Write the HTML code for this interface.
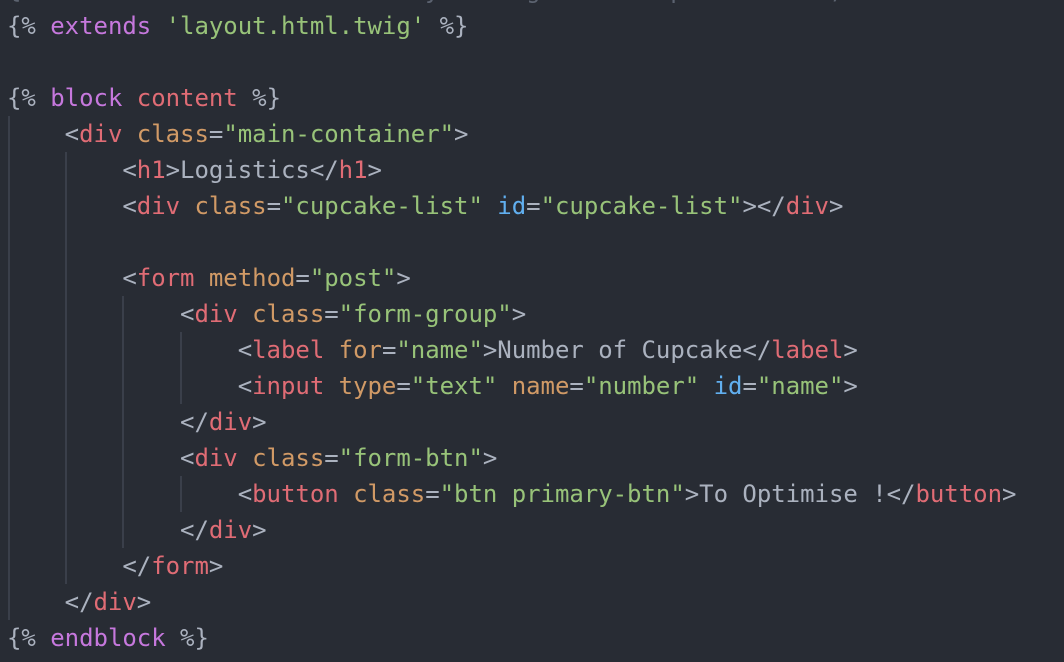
<!DOCTYPE html>
<html><head><meta charset="utf-8"><style>
html,body{margin:0;padding:0;background:#282c34;width:1064px;height:662px;overflow:hidden}
pre{position:absolute;left:7px;top:-28px;margin:0;font-family:"DejaVu Sans Mono","Liberation Mono",monospace;font-size:24px;line-height:36px;color:#abb2bf;letter-spacing:-0.03px}
.p{color:#c678dd}.g{color:#98c379}.r{color:#e06c75}.o{color:#d19a66}.b{color:#61afef}.c{color:#5c6370}
.gd{position:absolute;width:2px;background:#3a3f4a}
</style></head><body>
<div class="gd" style="left:8px;top:116px;height:504px"></div>
<div class="gd" style="left:65px;top:152px;height:432px"></div>
<div class="gd" style="left:122px;top:296px;height:252px"></div>
<div class="gd" style="left:180px;top:332px;height:72px"></div>
<div class="gd" style="left:180px;top:476px;height:36px"></div>
<pre><span class="c">{                            y      g         p          ,</span>
{% <span class="p">extends</span> <span class="g">'layout.html.twig'</span> %}

{% <span class="p">block</span> <span class="r">content</span> %}
    &lt;<span class="r">div</span> <span class="o">class</span>=<span class="g">"main-container"</span>&gt;
        &lt;<span class="r">h1</span>&gt;Logistics&lt;/<span class="r">h1</span>&gt;
        &lt;<span class="r">div</span> <span class="o">class</span>=<span class="g">"cupcake-list"</span> <span class="b">id</span>=<span class="g">"cupcake-list"</span>&gt;&lt;/<span class="r">div</span>&gt;

        &lt;<span class="r">form</span> <span class="o">method</span>=<span class="g">"post"</span>&gt;
            &lt;<span class="r">div</span> <span class="o">class</span>=<span class="g">"form-group"</span>&gt;
                &lt;<span class="r">label</span> <span class="o">for</span>=<span class="g">"name"</span>&gt;Number of Cupcake&lt;/<span class="r">label</span>&gt;
                &lt;<span class="r">input</span> <span class="o">type</span>=<span class="g">"text"</span> <span class="o">name</span>=<span class="g">"number"</span> <span class="b">id</span>=<span class="g">"name"</span>&gt;
            &lt;/<span class="r">div</span>&gt;
            &lt;<span class="r">div</span> <span class="o">class</span>=<span class="g">"form-btn"</span>&gt;
                &lt;<span class="r">button</span> <span class="o">class</span>=<span class="g">"btn primary-btn"</span>&gt;To Optimise !&lt;/<span class="r">button</span>&gt;
            &lt;/<span class="r">div</span>&gt;
        &lt;/<span class="r">form</span>&gt;
    &lt;/<span class="r">div</span>&gt;
{% <span class="p">endblock</span> %}</pre>
</body></html>
